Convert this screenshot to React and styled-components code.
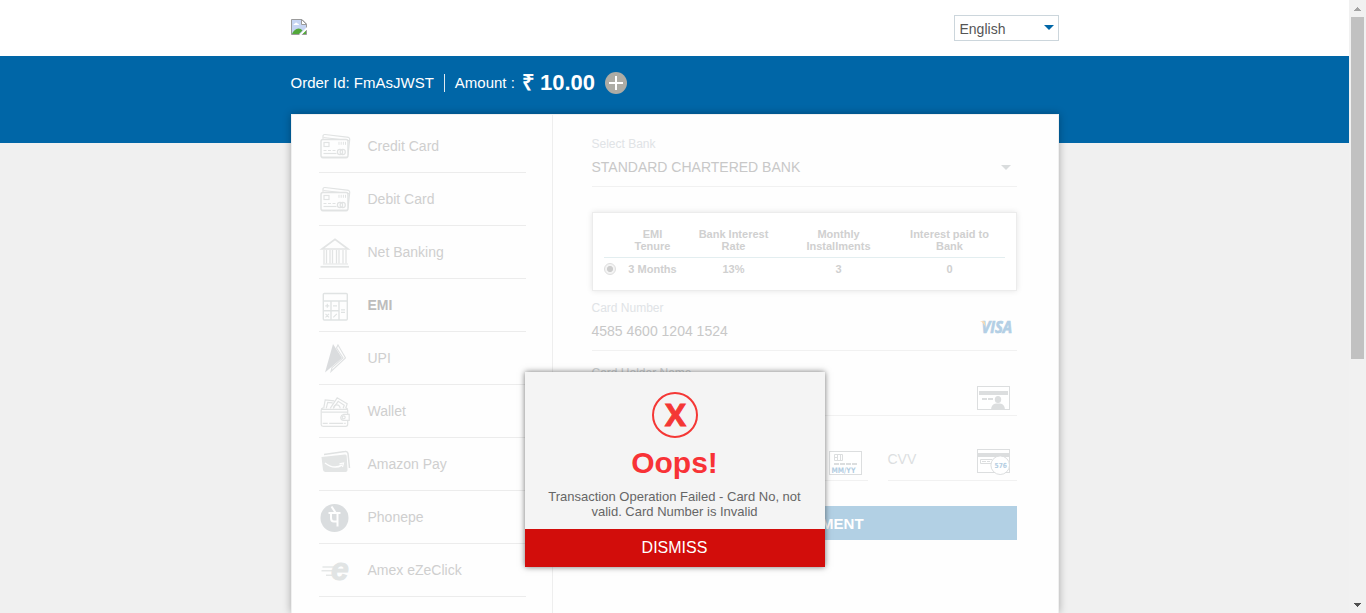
import React from "react";
import styled, { createGlobalStyle } from "styled-components";

const GlobalStyle = createGlobalStyle`
  *, *::before, *::after { box-sizing: border-box; }
  body {
    margin: 0;
    background: #f0f0f0;
    font-family: "Liberation Sans", Arial, sans-serif;
    font-size: 14px;
    overflow: hidden;
  }
`;

const Window = styled.div`
  display: flex;
  width: 1366px;
  height: 613px;
  overflow: hidden;
  position: relative;
`;

const Page = styled.div`
  flex: 1;
  display: flex;
  flex-direction: column;
`;

const Header = styled.header`
  height: 56px;
  flex: none;
  background: #fff;
`;

const Container = styled.div`
  width: 768px;
  margin: 0 auto;
`;

const HeaderRow = styled(Container)`
  display: flex;
  justify-content: space-between;
  align-items: flex-start;
  padding-top: 15px;
`;

const Logo = styled.svg`
  display: block;
  margin-top: 4px;
`;

const Language = styled.div`
  display: flex;
  align-items: center;
  justify-content: space-between;
  width: 105px;
  height: 26px;
  padding: 2px 4px 0 5px;
  border: 1px solid #ccd6dc;
  background: #fff;
  color: #555;
  font-size: 14px;
`;

const Caret = styled.span`
  width: 0;
  height: 0;
  border: 5px solid transparent;
  border-bottom: 0;
  border-top-color: ${(p) => p.$color};
  margin-top: ${(p) => p.$top || 0}px;
`;

const Band = styled.section`
  flex: none;
  height: 87px;
  background: #0066a7;
  color: #fff;
`;

const Summary = styled(Container)`
  display: flex;
  align-items: center;
  height: 54px;
  font-size: 15px;
  line-height: 18px;
  white-space: nowrap;
`;

const OrderId = styled.span`
  padding-right: 10px;
  border-right: 1px solid #dfe9f0;
`;

const AmountLabel = styled.span`
  margin-left: 10px;
`;

const Amount = styled.b`
  margin-left: 7px;
  font-size: 22px;
  line-height: 24px;
  word-spacing: -1px;
`;

const Expand = styled.svg`
  margin-left: 10px;
`;

const Card = styled.main`
  display: flex;
  flex: 1;
  width: 768px;
  margin: -29px auto 0;
  background: #fefefe;
  border: 1px solid #f0f0f0;
  border-bottom: 0;
  box-shadow: 0 0 8px rgba(0, 0, 0, 0.3);
`;

const Methods = styled.nav`
  width: 261px;
  flex: none;
  padding: 5px 26px 0 27px;
  border-right: 1px solid #eee;
`;

const Method = styled.div`
  display: flex;
  align-items: center;
  height: 53px;
  border-bottom: 1px solid #ececec;
  color: ${(p) => (p.$active ? "#bdbdbd" : "#cfcfcf")};
  font-weight: ${(p) => (p.$active ? 700 : 400)};
  svg {
    flex: none;
    width: 32px;
    height: 32px;
    margin-right: 17px;
    overflow: visible;
  }
`;

const Form = styled.section`
  width: 464px;
  flex: none;
  padding: 0 0 0 39px;
`;

const Field = styled.div`
  display: flex;
  justify-content: space-between;
  align-items: flex-end;
  width: ${(p) => (p.$width ? p.$width + "px" : "auto")};
  height: ${(p) => p.$height}px;
  padding: 0 ${(p) => p.$right || 0}px ${(p) => p.$bottom || 0}px 0;
  border-bottom: 1px solid #f1f1f1;
`;

const FieldText = styled.div`
  display: flex;
  flex-direction: column;
  align-self: flex-start;
  padding-top: ${(p) => p.$top || 0}px;
`;

const Label = styled.span`
  color: ${(p) => (p.$dark ? "#cdd1d3" : "#e0e3e6")};
  font-size: 12px;
  line-height: 16px;
`;

const Value = styled.span`
  margin-top: 7px;
  color: #c8c8c8;
  font-size: 14px;
  line-height: 16px;
`;

const Placeholder = styled.span`
  color: #dcdfe1;
  font-size: 14px;
  line-height: 16px;
`;

const Plans = styled.div`
  height: 79px;
  margin: 25px 0 9px;
  padding: 15px 11px 0 11px;
  border: 1px solid #ececec;
  background: #fff;
  box-shadow: 0 0 6px rgba(0, 0, 0, 0.1);
  color: #d0d0d0;
  font-size: 11px;
  font-weight: 700;
  line-height: 12px;
  text-align: center;
`;

const PlanRow = styled.div`
  display: grid;
  grid-template-columns: 17px 64px 98px 112px 110px;
  align-items: ${(p) => (p.$head ? "start" : "center")};
  height: ${(p) => (p.$head ? 30 : 22)}px;
  border-bottom: ${(p) => (p.$head ? "1px solid #e3eef0" : "0")};
`;

const Radio = styled.span`
  display: block;
  width: 12px;
  height: 12px;
  border: 1px solid #dedede;
  border-radius: 50%;
  background: radial-gradient(circle, #cdcdcd 0 2.7px, #f4f4f4 3.4px);
  margin-top: -1px;
`;

const Split = styled.div`
  display: flex;
  justify-content: space-between;
`;

const Pay = styled.button`
  display: block;
  width: 100%;
  height: 34px;
  margin-top: 25px;
  padding: 0;
  border: 0;
  background: #b2d0e4;
  color: #fff;
  font: 700 15px "Liberation Sans", Arial, sans-serif;
`;

const Dialog = styled.div`
  position: absolute;
  left: 524.5px;
  top: 372px;
  width: 300px;
  height: 195px;
  display: flex;
  flex-direction: column;
  align-items: center;
  background: #f4f4f4;
  box-shadow: 0 0 6px rgba(0, 0, 0, 0.55);
`;

const ErrorMark = styled.svg`
  flex: none;
  margin-top: 20px;
`;

const Title = styled.h2`
  margin: 7px 0 0;
  color: #f83236;
  font-size: 30px;
  line-height: 36px;
`;

const Message = styled.p`
  width: 270px;
  margin: 8px 0 0;
  color: #666;
  font-size: 13px;
  line-height: 15px;
  text-align: center;
`;

const Dismiss = styled.button`
  width: 100%;
  height: 38px;
  margin-top: auto;
  padding: 0;
  border: 0;
  background: #d20d0b;
  color: #fff;
  font: 16px "Liberation Sans", Arial, sans-serif;
`;

const Scrollbar = styled.aside`
  display: flex;
  flex-direction: column;
  align-items: center;
  width: 17px;
  background: #f1f1f1;
`;

const Thumb = styled.div`
  width: 13px;
  height: 342px;
  margin-bottom: auto;
  background: #c1c1c1;
`;

const ScrollArrow = ({ d, fill }) => (
  <svg width="17" height="17" viewBox="0 0 17 17" shapeRendering="crispEdges">
    <path d={d} fill={fill} />
  </svg>
);

const S = "#e1e3e3";

const CardsIcon = () => (
  <svg viewBox="0 0 32 32" fill="none" stroke={S} strokeWidth="1.2">
    <path d="M4 8.800V6.500Q4 4.300 6 4.500L28 7.100Q31 7.500 30.700 9.500L29 25" />
    <path d="M4.500 7.500L30 10.500" />
    <rect x="2" y="9.500" width="27" height="18" rx="2" fill="#fefefe" strokeWidth="1.500" />
    <path d="M2.500 27.500H28.500" strokeWidth="1.600" />
    <rect x="5" y="12.500" width="5" height="4" />
    <path d="M20 11.800v3M22.200 11.800v3M24.400 11.800v3M26.500 11.800v3" strokeWidth="1" />
    <path d="M4.500 20.500h13" strokeDasharray="3 1.500" />
    <path d="M4.500 23.500h13" />
    <circle cx="21" cy="22" r="2.600" />
    <circle cx="23.700" cy="22" r="2.600" />
  </svg>
);

const BankIcon = () => (
  <svg viewBox="0 0 32 32" fill="none" stroke="#e2e4e4" strokeWidth="1.500">
    <path d="M3 13L16 3.300L29 13Z" strokeWidth="1.700" />
    <path d="M5 14v13.500M7.500 14v13.500M11 14v13.500M13.500 14v13.500M17.500 14v13.500M20 14v13.500M24 14v13.500M27 14v13.500" strokeWidth="1.300" />
    <path d="M4 28h25" strokeWidth="1" />
    <path d="M1.500 30.800H30" strokeWidth="1.800" />
  </svg>
);

const CalculatorIcon = () => (
  <svg viewBox="0 0 32 32" fill="none" stroke="#e0e3e3" strokeWidth="1.400">
    <g transform="translate(-0.500 1.800)">
      <rect x="4.800" y="2.700" width="24" height="26.500" rx="1" />
      <path d="M5 10.200h24M12.500 10.200v19M20.500 10.200v19M5 20h15.500" />
      <path d="M6.800 15h4M8.800 13v4M14.500 15h4M22.500 19h4M22.500 21.500h4M7 23l3.500 3.500M10.500 23L7 26.500M14.800 26.500l3.500-3.500" strokeWidth="1.200" />
    </g>
  </svg>
);

const UpiIcon = () => (
  <svg viewBox="0 0 32 32">
    <g transform="translate(-0.500 1)">
      <path d="M14.500 1L23.500 15L6.500 29.500Z" fill="#dadcde" />
      <path d="M19.500 2L27 15L12.500 28.500L13.500 24.500L24.500 15L18 5Z" fill="none" stroke="#dfe1e2" strokeWidth="1.100" />
    </g>
  </svg>
);

const WalletIcon = () => (
  <svg viewBox="0 0 32 32" fill="none" stroke={S} strokeWidth="1.200">
    <g transform="translate(-0.300 1.300)">
      <path d="M5 12l1.500-8.500l9 1M7.500 12l1.500-6l5 .500M11.500 12l7-10.500l10 6l-1.500 4.500M14.500 12l5-7l6 4l-1 3" />
      <path d="M15 12q0-3.500 3-3.500t3.500 3.500" />
      <path d="M4.500 11.500Q2.500 12 2.500 14V28.500Q2.500 30 4.500 30H27Q29 30 29 28V14Q29 12 27 11.500" />
      <path d="M3 13h26M3 15.800h26" />
      <path d="M30.500 18H25Q22.500 18.500 22 21Q22 24 25 24H30.500Z" fill="#fefefe" />
      <circle cx="25" cy="21" r="1.500" />
      <path d="M4 27h23" strokeDasharray="5 1.500 14 1" />
    </g>
  </svg>
);

const AmazonIcon = () => (
  <svg viewBox="0 0 32 32">
    <path d="M5 6.500L26 3.500Q28.500 3 29 5.500L30.500 20" fill="none" stroke="#e0e2e2" strokeWidth="1.500" />
    <path d="M2.500 9L26 6.500Q27.500 6.300 27.700 8L28.500 22Q28.500 24 26.500 24H6.500Q4.500 24 4 22Z" fill="#e3e5e5" />
    <path d="M6 15Q15 22 23 17" fill="none" stroke="#fefefe" strokeWidth="1.500" />
    <path d="M20.500 15.800L24.500 15L23.500 19" fill="none" stroke="#fefefe" strokeWidth="1.200" />
  </svg>
);

const PhonepeIcon = () => (
  <svg viewBox="0 0 32 32">
    <circle cx="15.500" cy="17" r="14" fill="#dadddf" />
    <path d="M9.500 12H21.500M18.500 12V25.500M16.500 11.500L12.500 5.500M12 12V17Q12 20.500 15 20.500H18.500" fill="none" stroke="#fefefe" strokeWidth="2" />
  </svg>
);

const AmexIcon = () => (
  <svg viewBox="0 0 32 32">
    <path d="M3.500 13H16M2.500 16.800H14M7 21.300H13" stroke="#e5e7e7" strokeWidth="1.400" />
    <text x="12" y="25.500" fill="#e1e4e4" stroke="#e1e4e4" strokeWidth="0.900" fontFamily="Liberation Sans, sans-serif" fontStyle="italic" fontWeight="700" fontSize="32">e</text>
  </svg>
);

const methods = [
  ["Credit Card", CardsIcon],
  ["Debit Card", CardsIcon],
  ["Net Banking", BankIcon],
  ["EMI", CalculatorIcon],
  ["UPI", UpiIcon],
  ["Wallet", WalletIcon],
  ["Amazon Pay", AmazonIcon],
  ["Phonepe", PhonepeIcon],
  ["Amex eZeClick", AmexIcon],
];

const Visa = styled.svg`
  overflow: visible;
`;

const VisaLogo = () => (
  <Visa width="33" height="14" viewBox="0 0 33 14">
    <text x="1.500" y="13" fill="#b3cfe5" stroke="#b3cfe5" strokeWidth="0.700" fontFamily="Open Sans, sans-serif" fontStyle="italic" fontWeight="700" fontSize="16" textLength="30.500" lengthAdjust="spacingAndGlyphs">VISA</text>
    <path d="M0 1.200H4.500L5.500 7Q3.500 2.500 0 1.200Z" fill="#fbdcb3" />
  </Visa>
);

const HolderIcon = () => (
  <svg width="33" height="24" viewBox="0 0 33 24" fill="#dcdedf">
    <rect x="0.500" y="0.500" width="32" height="23" fill="#fff" stroke="#dcdedf" />
    <path d="M2 5h29v4H2zM5 12h5v2H5zM11 12h5v2h-5z" />
    <ellipse cx="21" cy="13.500" rx="3.200" ry="3.600" />
    <path d="M14 23.500Q14.500 18 19 17.500H23Q27.500 18 28 23.500Z" />
  </svg>
);

const ExpiryIcon = () => (
  <svg width="33" height="24" viewBox="0 0 33 24">
    <rect x="0.500" y="0.500" width="32" height="23" fill="#fff" stroke="#dcdedf" />
    <path d="M5.500 3.500h8v6h-8zM8.500 3.500v6M11.500 3.500v6M5.500 6.500h3" fill="none" stroke="#dcdedf" />
    <path d="M5 13h23" stroke="#dcdedf" strokeWidth="2" strokeDasharray="5 1" />
    <text x="2.500" y="21.500" fill="#b3cde2" fontFamily="DejaVu Sans, sans-serif" fontWeight="700" fontSize="7.500" textLength="24" lengthAdjust="spacingAndGlyphs">MM/YY</text>
  </svg>
);

const CvvIcon = () => (
  <svg width="33" height="26" viewBox="0 0 33 26">
    <rect x="0.500" y="0.500" width="32" height="23" fill="#fff" stroke="#dcdedf" />
    <path d="M0 4h33v4H0z" fill="#dcdedf" />
    <path d="M15 10.500H3.500v4H14M5 12.500h4M10 12.500h3" fill="none" stroke="#dcdedf" />
    <circle cx="23.200" cy="16.200" r="9.300" fill="#fff" stroke="#dcdedf" />
    <text x="17.500" y="18.500" fill="#b3cde2" fontFamily="DejaVu Sans, sans-serif" fontWeight="700" fontSize="7" textLength="12.500" lengthAdjust="spacingAndGlyphs">576</text>
  </svg>
);

export default function App() {
  return (
    <Window>
      <GlobalStyle />
      <Page>
        <Header>
          <HeaderRow>
            <Logo width="16" height="16" viewBox="0 0 16 16">
              <path d="M0.500 0.500H11L15.500 5V15.500H0.500Z" fill="#c6d5f3" stroke="#9b9b9b" />
              <path d="M10.500 0.500V5.500H15.500Z" fill="#fff" stroke="#9b9b9b" />
              <path d="M2.500 6Q2.500 4.500 4 4.500Q5 2.500 6.500 4.500Q8 4.500 8 6Z" fill="#fff" />
              <path d="M1 15Q3 10 7.500 9.500Q10 9.500 11.500 11.500L8 15Z" fill="#53a83a" />
              <path d="M11 15L15 11V15Z" fill="#53a83a" />
              <path d="M8 16L16 8V10.500L10.500 16Z" fill="#fff" />
            </Logo>
            <Language>
              English
              <Caret $color="#0066a7" $top={-4} />
            </Language>
          </HeaderRow>
        </Header>
        <Band>
          <Summary>
            <OrderId>Order Id: FmAsJWST</OrderId>
            <AmountLabel>Amount :</AmountLabel>
            <Amount>₹ 10.00</Amount>
            <Expand width="22" height="22" viewBox="0 0 22 22">
              <circle cx="11" cy="11" r="11" fill="#adaca5" />
              <path d="M4 11H18M11 4V18" stroke="#fff" strokeWidth="2" />
            </Expand>
          </Summary>
        </Band>
        <Card>
          <Methods>
            {methods.map(([name, Icon]) => (
              <Method key={name} $active={name === "EMI"}>
                <Icon />
                {name}
              </Method>
            ))}
          </Methods>
          <Form>
            <Field $height={72} $right={6} $bottom={16}>
              <FieldText $top={21}>
                <Label>Select Bank</Label>
                <Value>STANDARD CHARTERED BANK</Value>
              </FieldText>
              <Caret $color="#d9dcdd" />
            </Field>
            <Plans>
              <PlanRow $head>
                <span />
                <span>EMI<br />Tenure</span>
                <span>Bank Interest<br />Rate</span>
                <span>Monthly<br />Installments</span>
                <span>Interest paid to<br />Bank</span>
              </PlanRow>
              <PlanRow>
                <Radio />
                <span>3 Months</span>
                <span>13%</span>
                <span>3</span>
                <span>0</span>
              </PlanRow>
            </Plans>
            <Field $height={51} $right={4} $bottom={16}>
              <FieldText>
                <Label>Card Number</Label>
                <Value>4585 4600 1204 1524</Value>
              </FieldText>
              <VisaLogo />
            </Field>
            <Field $height={65} $right={7} $bottom={5}>
              <FieldText $top={14}>
                <Label $dark>Card Holder Name</Label>
              </FieldText>
              <HolderIcon />
            </Field>
            <Split>
              <Field $width={276} $height={65} $right={6} $bottom={5}>
                <span />
                <ExpiryIcon />
              </Field>
              <Field $width={129} $height={65} $right={7} $bottom={5}>
                <FieldText $top={35}>
                  <Placeholder>CVV</Placeholder>
                </FieldText>
                <CvvIcon />
              </Field>
            </Split>
            <Pay>MAKE PAYMENT</Pay>
          </Form>
        </Card>
      </Page>
      <Scrollbar>
        <ScrollArrow d="M8 7h1v1h1v1h1v1h1v1H5v-1h1V9h1V8h1z" fill="#a3a3a3" />
        <Thumb />
        <ScrollArrow d="M5 7h7v1h-1v1h-1v1H9v1H8v-1H7V9H6V8H5z" fill="#505050" />
      </Scrollbar>
      <Dialog role="alertdialog">
        <ErrorMark width="46" height="46" viewBox="0 0 46 46">
          <circle cx="23" cy="23" r="22" fill="none" stroke="#f43735" strokeWidth="2" />
          <text x="13" y="34.200" fill="#f43735" stroke="#f43735" strokeWidth="0.900" fontFamily="Open Sans, sans-serif" fontWeight="700" fontSize="31" textLength="21" lengthAdjust="spacingAndGlyphs">X</text>
        </ErrorMark>
        <Title>Oops!</Title>
        <Message>Transaction Operation Failed - Card No, not valid. Card Number is Invalid</Message>
        <Dismiss>DISMISS</Dismiss>
      </Dialog>
    </Window>
  );
}
